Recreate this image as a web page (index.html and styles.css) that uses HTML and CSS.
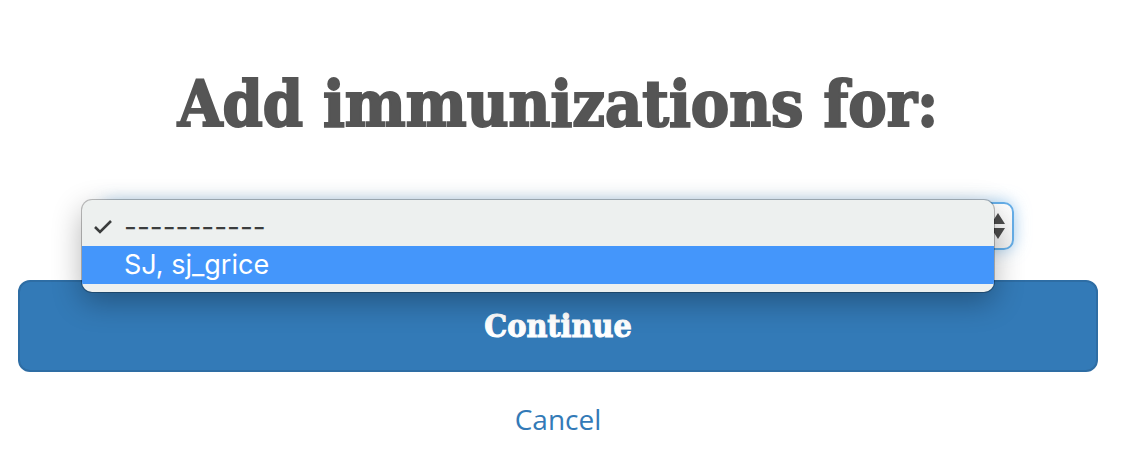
FILE: index.html
```html
<!DOCTYPE html>
<html lang="en">
<head>
<meta charset="utf-8">
<meta name="viewport" content="width=device-width, initial-scale=1">
<title>Add immunizations</title>
<link rel="stylesheet" href="styles.css">
</head>
<body>
<main class="page">
  <h1 class="title">Add immunizations for:</h1>
  <form class="form">
    <div class="picker">
      <select class="select" aria-label="Add immunizations for">
        <option></option>
      </select>
      <svg class="arrows" viewBox="0 0 14 26" aria-hidden="true"><path d="M7 0 14 11H0ZM0 15H14L7 26Z"/></svg>
      <div class="menu" role="listbox" aria-label="Patients">
        <div class="option" role="option" aria-selected="true">
          <svg class="check" viewBox="0 0 18 14" aria-hidden="true"><path d="M1 7 6 12 17 1"/></svg>
          <span>-----------</span>
        </div>
        <div class="option active" role="option" aria-selected="false"><span>SJ, sj_grice</span></div>
      </div>
    </div>
    <button class="continue" type="submit">Continue</button>
    <a class="cancel" href="#">Cancel</a>
  </form>
</main>
</body>
</html>
```
FILE: styles.css
```css
* { box-sizing: border-box; }
body {
  margin: 0;
  background: #fff;
  font-family: "Open Sans", sans-serif;
}
.page { padding: 64px 26px 0 18px; }
.title {
  margin: 0;
  color: #555;
  font: bold 64px/80px "DejaVu Serif Condensed", "DejaVu Serif", serif;
  -webkit-text-stroke: 2px #555;
  text-align: center;
}
.form {
  display: flex;
  flex-direction: column;
  align-items: center;
  margin-top: 58px;
}
.picker {
  position: relative;
  width: calc(100% - 168px);
}
.select {
  display: block;
  appearance: none;
  width: 100%;
  height: 48px;
  border: 2px solid #66afe9;
  border-radius: 10px;
  background: linear-gradient(#fff, #f4f4f4);
  box-shadow: 0 0 16px rgba(102, 175, 233, .6);
  outline: 0;
}
.arrows {
  position: absolute;
  top: 11px;
  right: 9px;
  width: 14px;
  height: 26px;
  fill: #4d4d4d;
}
.menu {
  position: absolute;
  z-index: 1;
  top: -2px;
  right: 20px;
  left: -20px;
  padding: 8px 0;
  overflow: hidden;
  border-radius: 10px;
  background: #edf0ef;
  box-shadow: 0 0 0 1px rgba(0, 0, 0, .25), 0 10px 30px rgba(0, 0, 0, .3);
  color: #3b3d3d;
  font: 28px/38px Inter, "Liberation Sans", sans-serif;
}
.option {
  display: grid;
  grid-template-columns: 19px 1fr;
  column-gap: 11px;
  align-items: center;
  height: 38px;
  padding-left: 12px;
}
.option span { grid-column: 2; }
.active {
  background: #4496fb;
  color: #fff;
  font-size: 27px;
}
.check {
  width: 18px;
  height: 14px;
  fill: none;
  stroke: currentColor;
  stroke-width: 2.6;
}
.continue {
  width: 100%;
  height: 92px;
  margin-top: 30px;
  padding: 0;
  border: 2px solid #2e6da4;
  border-radius: 12px;
  background: #337ab7;
  color: #fff;
  font: bold 32px/40px "DejaVu Serif Condensed", "DejaVu Serif", serif;
  -webkit-text-stroke: 1px #fff;
}
.cancel {
  margin-top: 27px;
  color: #337ab7;
  font-size: 28px;
  line-height: 40px;
  text-decoration: none;
}
```
